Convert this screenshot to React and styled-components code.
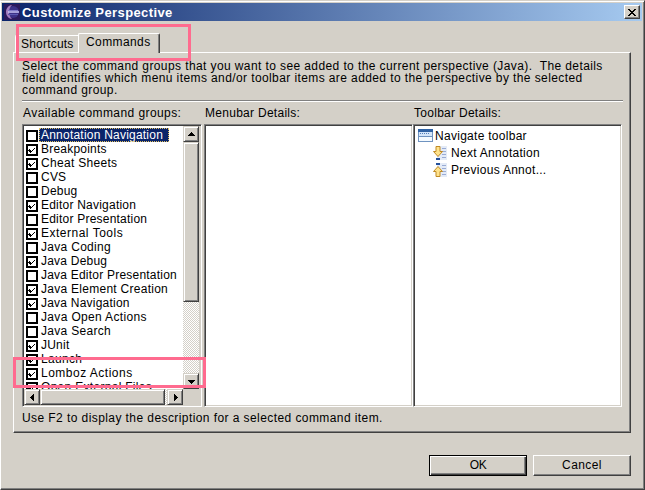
import React, { useState } from 'react'
import styled, { createGlobalStyle, css } from 'styled-components'

const face = '#d4d0c8'
const shadow = '#808080'
const dark = '#404040'

const GlobalStyle = createGlobalStyle`
  * {
    box-sizing: border-box;
  }

  body {
    margin: 0;
    overflow: hidden;
    background: ${face};
  }
`

const raised = css`
  background: ${face};
  border: 1px solid;
  border-color: ${face} ${dark} ${dark} ${face};
  box-shadow: inset 1px 1px #fff, inset -1px -1px ${shadow};
`

const Window = styled.div`
  position: relative;
  display: flex;
  flex-direction: column;
  width: 645px;
  height: 490px;
  padding: 2px 2px 1px 1px;
  background: ${face};
  border: 1px solid;
  border-color: ${face} ${dark} ${dark} #fff;
  box-shadow: inset 0 1px #fff, inset -1px -1px ${shadow};
  font-family: 'Liberation Sans', Arial, sans-serif;
  font-size: 12px;
  line-height: 14px;
  color: #000;
`

const TitleBar = styled.div`
  display: flex;
  align-items: center;
  height: 18px;
  padding: 0 2px;
  background: linear-gradient(to right, #0a246a, #a6caf0);
`

const Title = styled.div`
  flex: 1;
  margin-left: 2px;
  padding-top: 2px;
  color: #fff;
  font-size: 13px;
  font-weight: bold;
  letter-spacing: 0.4px;
`

const CloseButton = styled.button`
  ${raised}
  display: flex;
  align-items: center;
  justify-content: center;
  width: 16px;
  height: 14px;
  padding: 0;
  border-color: #fff ${dark} ${dark} #fff;
  box-shadow: inset -1px -1px ${shadow};
`

const TabBar = styled.div`
  display: flex;
  align-items: flex-end;
  height: 31px;
  padding-left: 13px;
`

const Tab = styled.div`
  height: 17px;
  width: 63px;
  padding: 1px 0 0 5px;
  border: solid #fff;
  border-width: 1px 0 0 1px;
  border-top-left-radius: 2px;
  letter-spacing: 0.2px;
  white-space: nowrap;

  ${(props) =>
    props.$active &&
    css`
      z-index: 1;
      width: 82px;
      height: 20px;
      margin-bottom: -1px;
      padding: 1px 0 0 7px;
      background: ${face};
      border-right: 1px solid ${dark};
      box-shadow: inset -1px 0 ${shadow};
      border-top-right-radius: 2px;
      letter-spacing: 0.4px;
    `}
`

const Panel = styled.div`
  width: 618px;
  height: 381px;
  margin-left: 11px;
  padding: 7px 7px 0 8px;
  border: 1px solid;
  border-color: #fff ${dark} ${dark} #fff;
  box-shadow: inset -1px -1px ${shadow};
`

const Description = styled.div`
  height: 40px;
  line-height: 12px;
  letter-spacing: 0.4px;
  white-space: pre;
`

const Separator = styled.div`
  height: 2px;
  border-top: 1px solid ${shadow};
  border-bottom: 1px solid #fff;
`

const Columns = styled.div`
  display: grid;
  grid-template-columns: 182px 209px 209px;
  padding-top: 4px;
`

const Heading = styled.div`
  height: 18px;
  padding-left: 1px;
  letter-spacing: ${(props) => props.$spacing || '0.28px'};
`

const Sunken = styled.div`
  width: ${(props) => props.$width || '209px'};
  height: 283px;
  background: #fff;
  border: 1px solid;
  border-color: ${shadow} #fff #fff ${shadow};
  box-shadow: inset 1px 1px ${dark}, inset -1px -1px ${face};
  padding: 2px;
  overflow: hidden;
`

const ScrollArea = styled(Sunken)`
  display: grid;
  grid-template-columns: 159px 16px;
  grid-template-rows: 263px 16px;
  background: ${face};
  padding: 1px;
`

const List = styled.div`
  padding: 2px 0 0 2px;
  overflow: hidden;
  background: #fff;
`

const ListItem = styled.div`
  display: flex;
  align-items: flex-end;
  height: 14px;
  cursor: default;
`

const CheckBox = styled.span`
  display: flex;
  width: 12px;
  height: 12px;
  margin-right: 1px;
  border: 2px solid #000;
`

const Label = styled.span`
  height: 14px;
  padding: 0 6px 0 2px;
  line-height: 14px;
  letter-spacing: ${(props) => props.$spacing || 0.22}px;
  white-space: nowrap;

  ${(props) =>
    props.$selected &&
    css`
      color: #fff;
      background: #0a246a;
      outline: 1px dotted #e0c060;
      outline-offset: -1px;
    `}
`

const ScrollBar = styled.div`
  display: flex;
  flex-direction: ${(props) => (props.$vertical ? 'column' : 'row')};
  justify-content: space-between;
  background: repeating-conic-gradient(${face} 0 25%, #fff 0 50%) 0 0 / 2px 2px;
`

const ScrollButton = styled.div`
  ${raised}
  display: flex;
  align-items: center;
  justify-content: center;
  width: 16px;
  height: 16px;
`

const Thumb = styled.div`
  ${raised}
  ${(props) => (props.$vertical ? 'height: 160px; margin-bottom: auto;' : 'width: 125px; margin-right: auto;')}
`

const TreeItem = styled.div`
  display: flex;
  align-items: center;
  gap: ${(props) => (props.$nested ? '3px' : '2px')};
  height: 17px;
  padding-left: ${(props) => (props.$nested ? '17px' : '2px')};
  letter-spacing: 0.28px;
`

const Hint = styled.div`
  padding-top: 4px;
  letter-spacing: 0.42px;
`

const ButtonBar = styled.div`
  display: flex;
  justify-content: flex-end;
  gap: 6px;
  padding: 22px 11px 0 0;
`

const Button = styled.button`
  ${raised}
  width: 98px;
  height: 21px;
  padding: 0 0 2px;
  border-color: #fff ${dark} ${dark} #fff;
  box-shadow: inset -1px -1px ${shadow};
  font: inherit;
  letter-spacing: 0.4px;

  ${(props) =>
    props.$primary &&
    css`
      border-color: #000;
      box-shadow: inset 1px 1px #fff, inset -1px -1px ${dark}, inset -2px -2px ${shadow};
      letter-spacing: -0.3px;
    `}
`

const Marker = styled.div`
  position: absolute;
  z-index: 2;
  left: ${(props) => props.$x}px;
  top: ${(props) => props.$y}px;
  width: ${(props) => props.$w}px;
  height: ${(props) => props.$h}px;
  border: 3px solid #ff6b8f;
  pointer-events: none;
`

const EclipseIcon = () => (
  <svg width="16" height="16" viewBox="0 0 16 16">
    <rect width="16" height="16" fill="#2c1a5c" />
    <circle cx="9" cy="8" r="6" fill="#3d3288" />
    <path d="M8 1C0 2 0 14 8 15C4 11 4 5 8 1" fill="#a57fc0" />
    <path d="M4 6.500h10" stroke="#7d78c8" />
    <path d="M4 8h11" stroke="#c8c4f4" strokeWidth="1.500" />
    <path d="M4 10.500h10" stroke="#5b58b0" />
  </svg>
)

const CloseIcon = () => (
  <svg width="8" height="7" viewBox="0 0 8 7" shapeRendering="crispEdges">
    <path d="M0 0h2v1h1v1h2v-1h1v-1h2v1h-1v1h-1v1h-1v1h1v1h1v1h1v1h-2v-1h-1v-1h-2v1h-1v1h-2v-1h1v-1h1v-1h1v-1h-1v-1h-1v-1h-1z" />
  </svg>
)

const CheckIcon = () => (
  <svg width="8" height="8" viewBox="0 0 8 8" shapeRendering="crispEdges">
    <path d="M1 3h1v1h1v1h1v-1h1v-1h1v-1h1v1h-1v1h-1v1h-1v1h-1v1h-1v-1h-1v-1h-1z" />
  </svg>
)

const arrows = {
  up: 'M3 1h1v1h1v1h1v1h1v1h-7v-1h1v-1h1v-1h1z',
  down: 'M0 2h7v1h-1v1h-1v1h-1v1h-1v-1h-1v-1h-1v-1h-1z',
  left: 'M5 0v7h-1v-1h-1v-1h-1v-1h-1v-1h1v-1h1v-1h1v-1z',
  right: 'M2 0v7h1v-1h1v-1h1v-1h1v-1h-1v-1h-1v-1h-1v-1z',
}

const Arrow = ({ direction }) => (
  <ScrollButton>
    <svg width="7" height="7" viewBox="0 0 7 7" shapeRendering="crispEdges">
      <path d={arrows[direction]} />
    </svg>
  </ScrollButton>
)

const ToolbarIcon = () => (
  <svg width="15" height="13" viewBox="0 0 15 13" shapeRendering="crispEdges">
    <rect width="15" height="13" fill="#6f93c0" />
    <rect width="15" height="3" fill="#2f62a4" />
    <rect x="1" y="3" width="13" height="4" fill="#d3e5fa" />
    <rect x="1" y="8" width="13" height="4" fill="#f4faff" />
    <path d="M2 4.5h9" stroke="#5580b8" strokeDasharray="1 1" />
  </svg>
)

const AnnotationIcon = ({ up }) => (
  <svg width="15" height="16" viewBox="0 0 15 16">
    <rect x="4" y="1" width="10" height="14" fill="#e4ebf7" />
    <path d="M9 3.5h4M9 6.5h4M9 9.5h4M9 12.5h4" stroke="#9aacd4" />
    <path d={up ? 'M3 2h4' : 'M3 14h4'} stroke="#24509c" strokeWidth="2" />
    <path
      d={up ? 'M5 4.5l4.5 5H7v5H3v-5H.5z' : 'M5 11.5L.5 6.500H3V1.500h4v5h2.500z'}
      fill="#ffe38c"
      stroke="#c08a24"
    />
  </svg>
)

// name, checked, letter spacing
const commandGroups = [
  ['Annotation Navigation', false],
  ['Breakpoints', true],
  ['Cheat Sheets', true, 0.3],
  ['CVS', false],
  ['Debug', false],
  ['Editor Navigation', true],
  ['Editor Presentation', false],
  ['External Tools', true, 0.5],
  ['Java Coding', false, 0.3],
  ['Java Debug', true],
  ['Java Editor Presentation', false],
  ['Java Element Creation', true, 0.27],
  ['Java Navigation', true],
  ['Java Open Actions', false, 0.34],
  ['Java Search', false, 0.3],
  ['JUnit', true],
  ['Launch', true, 0.3],
  ['Lomboz Actions', true, 0.5],
  ['Open External Files', true, 0.3],
]

const App = () => {
  const [groups, setGroups] = useState(commandGroups)

  const toggle = (name) => {
    setGroups(groups.map((g) => (g[0] === name ? [name, !g[1], g[2]] : g)))
  }

  return (
    <Window>
      <GlobalStyle />
      <TitleBar>
        <EclipseIcon />
        <Title>Customize Perspective</Title>
        <CloseButton>
          <CloseIcon />
        </CloseButton>
      </TitleBar>
      <TabBar>
        <Tab>Shortcuts</Tab>
        <Tab $active>Commands</Tab>
      </TabBar>
      <Panel>
        <Description>
          {'Select the command groups that you want to see added to the current perspective (Java).  The details\n'}
          {'field identifies which menu items and/or toolbar items are added to the perspective by the selected\n'}
          {'command group.'}
        </Description>
        <Separator />
        <Columns>
          <div>
            <Heading $spacing="0.42px">Available command groups:</Heading>
            <ScrollArea $width="180px">
              <List>
                {groups.map(([name, checked, spacing], i) => (
                  <ListItem key={name} onClick={() => toggle(name)}>
                    <CheckBox>{checked && <CheckIcon />}</CheckBox>
                    <Label $selected={i === 0} $spacing={spacing}>
                      {name}
                    </Label>
                  </ListItem>
                ))}
              </List>
              <ScrollBar $vertical>
                <Arrow direction="up" />
                <Thumb $vertical />
                <Arrow direction="down" />
              </ScrollBar>
              <ScrollBar>
                <Arrow direction="left" />
                <Thumb />
                <Arrow direction="right" />
              </ScrollBar>
            </ScrollArea>
          </div>
          <div>
            <Heading>Menubar Details:</Heading>
            <Sunken />
          </div>
          <div>
            <Heading>Toolbar Details:</Heading>
            <Sunken>
              <TreeItem>
                <ToolbarIcon />
                Navigate toolbar
              </TreeItem>
              <TreeItem $nested>
                <AnnotationIcon />
                Next Annotation
              </TreeItem>
              <TreeItem $nested>
                <AnnotationIcon up />
                Previous Annot...
              </TreeItem>
            </Sunken>
          </div>
        </Columns>
        <Hint>Use F2 to display the description for a selected command item.</Hint>
      </Panel>
      <ButtonBar>
        <Button $primary>OK</Button>
        <Button>Cancel</Button>
      </ButtonBar>
      <Marker $x={15} $y={23} $w={175} $h={37} />
      <Marker $x={12} $y={356} $w={193} $h={31} />
    </Window>
  )
}

export default App
